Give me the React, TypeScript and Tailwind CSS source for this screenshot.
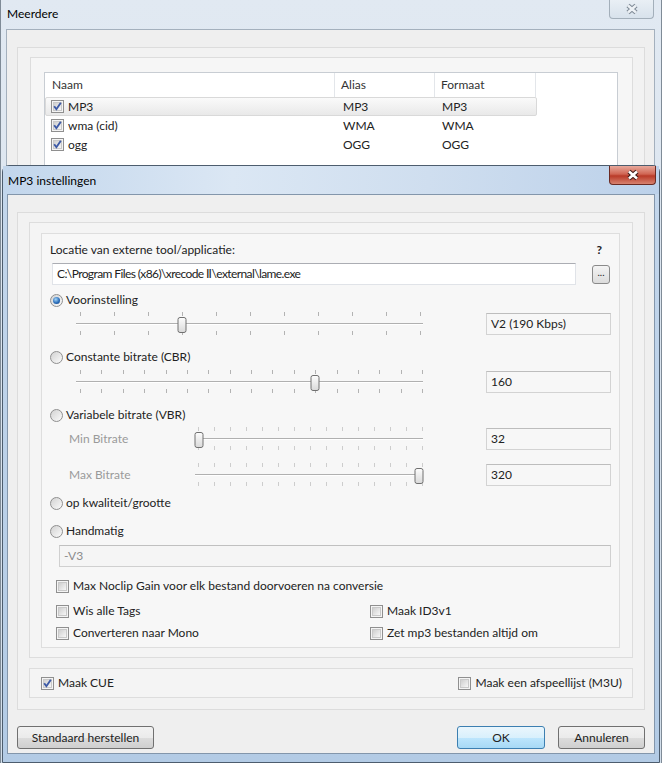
import React from 'react';

function XGlyph({ active }: { active?: boolean }) {
  return (
    <svg width="16" height="12" viewBox="0 0 16 12">
      <path d="M4 2.5L12 9.5M12 2.5L4 9.5" stroke={active ? '#3b1a16' : '#7c8894'} strokeWidth="4.6" />
      <path d="M4 2.5L12 9.5M12 2.5L4 9.5" stroke={active ? '#ffffff' : '#edf1f5'} strokeWidth="2.6" />
    </svg>
  );
}

function Check({ on }: { on?: boolean }) {
  return (
    <span className="relative flex w-[13px] h-[13px] shrink-0 items-center justify-center border border-[#8f8f8f] bg-[#f4f4f4]">
      <span className="w-[9px] h-[9px] border border-[#c9c9c9] bg-gradient-to-br from-[#cfcfcf] to-[#f7f7f7]" />
      {on && (
        <svg className="absolute left-0 top-0" width="11" height="11" viewBox="0 0 11 11">
          <path d="M2.2 5.2L4.4 8.2L8.8 1.8" fill="none" stroke="#3d5aa6" strokeWidth="1.9" />
        </svg>
      )}
    </span>
  );
}

function Radio({ on }: { on?: boolean }) {
  return (
    <span className="flex w-[13px] h-[13px] shrink-0 items-center justify-center rounded-full border border-[#8f8f8f] bg-gradient-to-br from-[#d2d2d2] to-[#fbfbfb]">
      {on && <span className="w-[7px] h-[7px] rounded-full bg-[radial-gradient(circle_at_40%_35%,#a6d6f7,#2c6fbb_55%,#0f3c7d)]" />}
    </span>
  );
}

function Slider({ width, n, t0, t1, thumb, id, dim }: { width: number; n: number; t0: number; t1: number; thumb: number; id: string; dim?: boolean }) {
  const xs = Array.from({ length: n }, (_, i) => Math.round(t0 + ((t1 - t0) * i) / (n - 1)));
  const tick = dim ? '#cdcdcd' : '#b3b3b3';
  return (
    <svg width={width} height={24} className="shrink-0">
      <defs>
        <linearGradient id={id} x1="0" y1="0" x2="0" y2="1">
          <stop offset="0" stopColor="#fdfdfd" />
          <stop offset="1" stopColor="#d9d9d9" />
        </linearGradient>
      </defs>
      {xs.map((x, i) => (
        <g key={i}>
          <line x1={x + 0.5} x2={x + 0.5} y1={0} y2={4} stroke={tick} />
          <line x1={x + 0.5} x2={x + 0.5} y1={19} y2={23} stroke={tick} />
        </g>
      ))}
      <line x1={4} x2={width - 4} y1={11.5} y2={11.5} stroke="#b0b0b0" />
      <line x1={4} x2={width - 4} y1={12.5} y2={12.5} stroke="#ffffff" />
      <rect x={thumb - 4.5} y={5.5} width={8} height={15} rx={2} fill={`url(#${id})`} stroke="#707070" />
    </svg>
  );
}

function ValueBox({ value }: { value: string }) {
  return (
    <div className="ml-auto flex w-[125px] h-[22px] items-center border border-[#d3d3d3] border-t-[#bdbdbd] bg-[#f7f7f7] pl-[4px]">
      {value}
    </div>
  );
}

function Btn({ children, className }: { children: React.ReactNode; className: string }) {
  return (
    <button className={`flex h-[23px] items-center justify-center rounded-[3px] border ${className}`}>
      {children}
    </button>
  );
}

function CheckRow({ label, on, className }: { label: string; on?: boolean; className?: string }) {
  return (
    <label className={`flex h-[16px] items-center gap-[4px] ${className ?? ''}`}>
      <Check on={on} />
      <span>{label}</span>
    </label>
  );
}

function RadioRow({ label, on, className }: { label: string; on?: boolean; className: string }) {
  return (
    <label className={`flex h-[16px] items-center gap-[3px] ${className}`}>
      <Radio on={on} />
      <span>{label}</span>
    </label>
  );
}

export default function App() {
  const formats = [
    { name: 'MP3', alias: 'MP3', fmt: 'MP3', sel: true },
    { name: 'wma (cid)', alias: 'WMA', fmt: 'WMA' },
    { name: 'ogg', alias: 'OGG', fmt: 'OGG' },
  ];

  return (
    <div className="relative w-[662px] h-[763px] overflow-hidden bg-[#d9e3ee] font-['Lato',sans-serif] text-[12px] leading-none text-[#222]">
      {/* achterste venster: Meerdere */}
      <div className="absolute left-0 top-0 w-[662px] h-[763px] border-x border-[#7f8b97] bg-gradient-to-b from-[#e1e9f2] to-[#d3dfeb]">
        <div className="flex h-[29px] items-start justify-between pl-[6px] pr-[7px]">
          <span className="mt-[8px] text-black">Meerdere</span>
          <div className="flex w-[45px] h-[19px] items-center justify-center rounded-b-[4px] border border-t-0 border-[#a3afba] bg-gradient-to-b from-[#e9eff5] to-[#d8e2ec]">
            <XGlyph />
          </div>
        </div>
        <div className="ml-[5px] w-[649px] h-[734px] border border-[#a4b0bd] bg-[#efefef] pl-[10px] pt-[17px]">
          <div className="w-[628px] h-[700px] border border-[#dcdcdc] bg-[#f2f2f2] pl-[12px] pt-[9px]">
            <div className="w-[603px] h-[680px] border border-[#dddddd] bg-[#f6f6f6] pl-[13px] pt-[14px]">
              <div className="w-[574px] h-[600px] border border-[#c8cdd3] bg-white">
                <div className="flex h-[24px] items-center text-[#333]">
                  <div className="flex h-full w-[290px] items-center border-r border-[#e3e6ea] pl-[7px]">Naam</div>
                  <div className="flex h-full w-[100px] items-center border-r border-[#e3e6ea] pl-[6px]">Alias</div>
                  <div className="flex h-full w-[101px] items-center border-r border-[#e3e6ea] pl-[6px]">Formaat</div>
                </div>
                {formats.map((f) => (
                  <div
                    key={f.name}
                    className={`flex h-[19px] w-[492px] items-center ${f.sel ? 'rounded-[2px] border border-[#d9d9d9] bg-gradient-to-b from-[#fafafa] to-[#e9e9e9]' : 'border border-transparent'}`}
                  >
                    <div className="flex w-[289px] items-center gap-[4px] pl-[5px]">
                      <Check on />
                      <span>{f.name}</span>
                    </div>
                    <div className="w-[100px] pl-[8px]">{f.alias}</div>
                    <div className="pl-[7px]">{f.fmt}</div>
                  </div>
                ))}
              </div>
            </div>
          </div>
        </div>
      </div>

      {/* voorste venster: MP3 instellingen */}
      <div className="absolute left-[2px] top-[165px] w-[658px] h-[598px] rounded-t-[7px] border border-[#4d5d6e] bg-gradient-to-b from-[#c4d7ec] to-[#b3cbe5]">
        <div className="flex h-[28px] items-start justify-between bg-[linear-gradient(90deg,#c2d6ec,#dbe7f4_35%,#cfdeef_65%,#bcd1ea)] pl-[5px] pr-[3px]">
          <span className="mt-[9px] text-black">MP3 instellingen</span>
          <div className="flex w-[47px] h-[19px] items-center justify-center rounded-b-[4px] border border-t-0 border-[#6b2a22] bg-[linear-gradient(180deg,#e8a99c,#d06553_45%,#b93a28_55%,#d7826f)]">
            <XGlyph active />
          </div>
        </div>
        <div className="ml-[4px] w-[648px] h-[560px] border border-[#8396ab] bg-[#efefef] pl-[9px] pt-[17px]">
          <div className="w-[628px] h-[498px] border border-[#dcdcdc] bg-[#f2f2f2] pl-[11px] pt-[9px]">
            <div className="w-[604px] h-[436px] border border-[#dddddd] bg-[#f4f4f4] pl-[11px] pt-[10px]">
              <div className="flex w-[579px] h-[415px] flex-col border border-[#dedede] bg-[#f7f7f7] pl-[8px] pr-[8px] pt-[8px]">
                <div className="flex h-[16px] items-center justify-between">
                  <span>Locatie van externe tool/applicatie:</span>
                  <span className="mr-[9px] font-bold">?</span>
                </div>
                <div className="mt-[5px] flex h-[22px] items-center">
                  <div className="ml-[2px] flex h-[22px] w-[524px] items-center border border-[#e0e3e8] border-t-[#abadb3] bg-white pl-[4px] tracking-[-0.6px]">
                    {'C:\\Program Files (x86)\\xrecode \u2161\\external\\lame.exe'}
                  </div>
                  <Btn className="ml-auto mr-[1px] w-[18px] !h-[19px] border-[#8a8a8a] bg-gradient-to-b from-[#f4f4f4] to-[#dcdcdc] pb-[4px] text-[10px]">...</Btn>
                </div>
                <RadioRow label="Voorinstelling" on className="mt-[7px]" />
                <div className="mt-[3px] flex h-[26px] items-center">
                  <div className="ml-[22px]">
                    <Slider id="s1" width={355} n={11} t0={8} t1={348} thumb={110.5} />
                  </div>
                  <ValueBox value="V2 (190 Kbps)" />
                </div>
                <RadioRow label="Constante bitrate (CBR)" className="mt-[12px]" />
                <div className="mt-[4px] flex h-[26px] items-center">
                  <div className="ml-[22px]">
                    <Slider id="s2" width={355} n={17} t0={8} t1={350} thumb={243.5} />
                  </div>
                  <ValueBox value="160" />
                </div>
                <RadioRow label="Variabele bitrate (VBR)" className="mt-[12px]" />
                <div className="mt-[3px] flex h-[26px] items-center">
                  <span className="ml-[19px] w-[122px] text-[#9a9a9a]">Min Bitrate</span>
                  <Slider id="s3" width={236} n={15} t0={7} t1={231} thumb={8.5} dim />
                  <ValueBox value="32" />
                </div>
                <div className="mt-[10px] flex h-[26px] items-center">
                  <span className="ml-[19px] w-[122px] text-[#9a9a9a]">Max Bitrate</span>
                  <Slider id="s4" width={236} n={15} t0={7} t1={231} thumb={228.5} dim />
                  <ValueBox value="320" />
                </div>
                <RadioRow label="op kwaliteit/grootte" className="mt-[7px]" />
                <RadioRow label="Handmatig" className="mt-[12px]" />
                <div className="mt-[6px] ml-[9px] flex h-[22px] items-center border border-[#d0d0d0] border-t-[#c0c0c0] bg-[#f5f5f5] pl-[4px] text-[#8c8c8c]">
                  -V3
                </div>
                <CheckRow label="Max Noclip Gain voor elk bestand doorvoeren na conversie" className="mt-[11px] ml-[6px]" />
                <div className="mt-[9px] ml-[6px] grid grid-cols-[314px_1fr]">
                  <CheckRow label="Wis alle Tags" />
                  <CheckRow label="Maak ID3v1" />
                </div>
                <div className="mt-[6px] ml-[6px] grid grid-cols-[314px_1fr]">
                  <CheckRow label="Converteren naar Mono" />
                  <CheckRow label="Zet mp3 bestanden altijd om" />
                </div>
              </div>
            </div>
            <div className="mt-[10px] flex w-[604px] h-[30px] items-center justify-between border border-[#dddddd] bg-[#f4f4f4] pl-[11px] pr-[10px]">
              <CheckRow label="Maak CUE" on />
              <CheckRow label="Maak een afspeellijst (M3U)" />
            </div>
          </div>
          <div className="mt-[16px] flex w-[628px] items-center">
            <Btn className="w-[137px] border-[#707070] bg-[linear-gradient(180deg,#f2f2f2,#ebebeb_50%,#dddddd_50%,#cfcfcf)]">Standaard herstellen</Btn>
            <Btn className="ml-auto w-[88px] border-[#3c7fb1] bg-[linear-gradient(180deg,#eaf6fd,#d9f0fc_50%,#bee6fd_50%,#a7d9f5)]">OK</Btn>
            <Btn className="ml-[13px] w-[87px] border-[#707070] bg-[linear-gradient(180deg,#f2f2f2,#ebebeb_50%,#dddddd_50%,#cfcfcf)]">Annuleren</Btn>
          </div>
        </div>
      </div>
    </div>
  );
}
